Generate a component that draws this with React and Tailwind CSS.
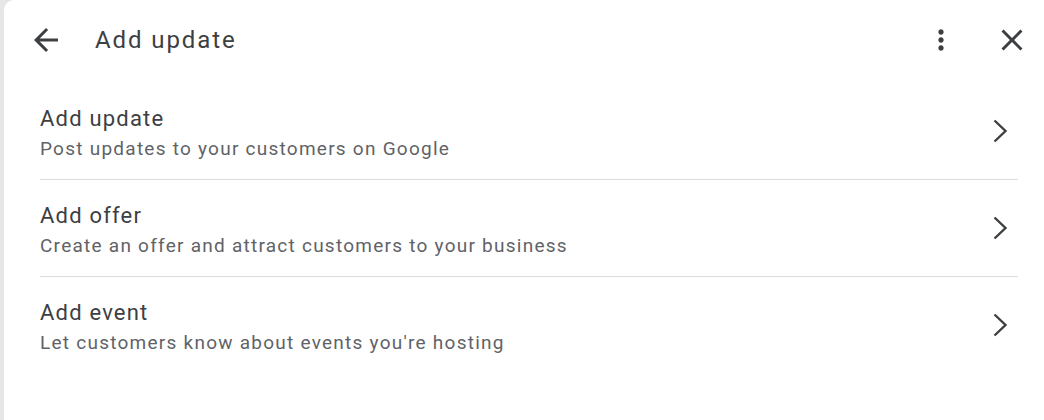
import React from 'react';

const items = [
    { title: 'Add update', sub: 'Post updates to your customers on Google' },
    { title: 'Add offer', sub: 'Create an offer and attract customers to your business' },
    { title: 'Add event', sub: "Let customers know about events you're hosting" },
];

const Chevron = () => (
    <svg width="24" height="28" viewBox="0 0 24 28" fill="none" className="shrink-0">
        <path d="M6.5 3.5 17.5 14 6.5 24.5" stroke="#3c4043" strokeWidth="2.4" />
    </svg>
);

const App = () => {
    return (
        <div className="w-[1044px] h-[420px] bg-[#e6e6e6] pl-[4px] overflow-hidden" style={{ fontFamily: 'Roboto, "Liberation Sans", sans-serif' }}>
            <div className="h-full bg-white rounded-tl-[10px] text-[#3c4043]">
                {/* header */}
                <div className="h-[80px] flex items-center pl-[24px] pr-[14px]">
                    <button className="w-[36px] h-[36px] flex items-center justify-center">
                        <svg width="36" height="36" viewBox="0 0 24 24" fill="#3c4043">
                            <path d="M20 11H7.83l5.59-5.59L12 4l-8 8 8 8 1.41-1.41L7.83 13H20v-2z" />
                        </svg>
                    </button>
                    <h1 className="ml-[31px] text-[24px] leading-[30px] tracking-[1.9px] flex-1">Add update</h1>
                    <button className="w-[36px] h-[36px] flex items-center justify-center">
                        <svg width="32" height="32" viewBox="0 0 24 24" fill="#3c4043">
                            <path d="M12 8c1.1 0 2-.9 2-2s-.9-2-2-2-2 .9-2 2 .9 2 2 2zm0 2c-1.1 0-2 .9-2 2s.9 2 2 2 2-.9 2-2-.9-2-2-2zm0 6c-1.1 0-2 .9-2 2s.9 2 2 2 2-.9 2-2-.9-2-2-2z" />
                        </svg>
                    </button>
                    <button className="ml-[35px] w-[36px] h-[36px] flex items-center justify-center">
                        <svg width="36" height="36" viewBox="0 0 24 24" fill="#3c4043">
                            <path d="M19 6.41 17.59 5 12 10.59 6.41 5 5 6.41 10.59 12 5 17.59 6.41 19 12 13.41 17.59 19 19 17.59 13.41 12z" />
                        </svg>
                    </button>
                </div>

                {/* options */}
                <div className="pl-[36px] pr-[26px] pt-[3px]">
                    {items.map((it, i) => (
                        <div key={it.title} className={'flex items-center pt-[22px] pb-[18px] ' + (i < items.length - 1 ? 'border-b border-[#dadce0]' : '')}>
                            <div className="flex-1">
                                <div className="text-[22px] leading-[28px] tracking-[1.2px] text-[#3c4043]">{it.title}</div>
                                <div className="mt-[3px] text-[19px] leading-[25px] tracking-[1.25px] text-[#5f6368]">{it.sub}</div>
                            </div>
                            <div className="mr-[6px] mb-[4px]">
                                <Chevron />
                            </div>
                        </div>
                    ))}
                </div>
            </div>
        </div>
    );
};

export default App;
